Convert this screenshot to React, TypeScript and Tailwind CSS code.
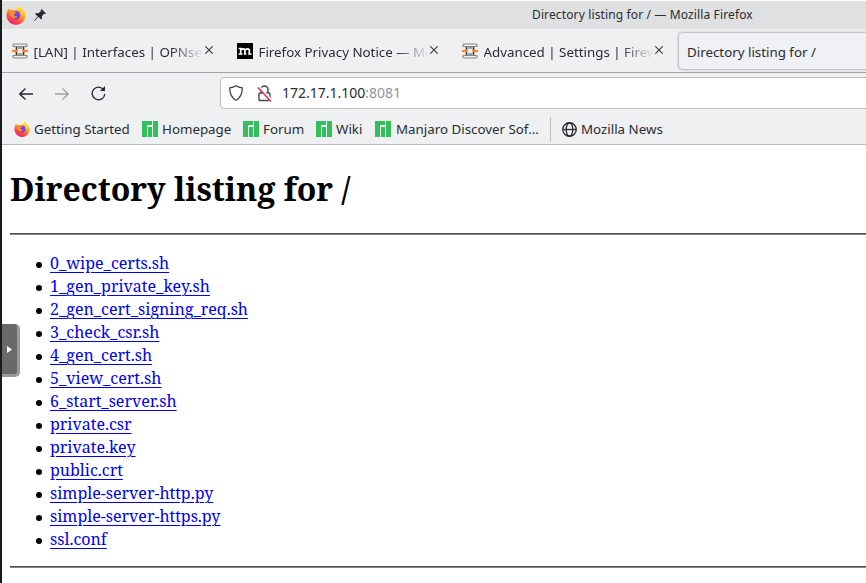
import type { ReactNode } from 'react';

function FirefoxIcon({ size }: { size: number }) {
  return (
    <svg width={size} height={size} viewBox="0 0 20 20" className="shrink-0">
      <defs>
        <linearGradient id="flame" x1="0.8" y1="0.05" x2="0.3" y2="1">
          <stop offset="0" stopColor="#fff04a" />
          <stop offset="0.35" stopColor="#ffb32c" />
          <stop offset="0.65" stopColor="#ff5b36" />
          <stop offset="1" stopColor="#ee1b70" />
        </linearGradient>
      </defs>
      <path d="M2.5 3.5 4 5l2-1 1.5 1.5C9 4.5 10.500 4 11.500 3.500L13 .3c1 1.700 3 3.200 4.500 5 1.400 1.600 2 3.200 2 5A9.500 9.500 0 0 1 .5 10.500c0-2.600.8-5 2-7Z" fill="url(#flame)" />
      <circle cx="10" cy="10.200" r="4.300" fill="#7542e5" />
      <path d="M3 7c2-2 4-1.500 5-.2l2.500.2c-.3 1.300-2 1.500-2.500 2.500 0 1.500 1.500 2.200 3.500 1.500-1 2.500-4.500 3-6.500.5C4 10 4 8.500 3 7Z" fill="#ff8a2b" />
      <path d="M10.500 5.500c2.500-.5 4.500 1.500 4.300 4.500.8-.5.800-1.500.7-2.500C14.500 4.500 12 4 10.500 5.500Z" fill="#ffbd32" />
    </svg>
  );
}

function OpnIcon() {
  return (
    <svg width="16" height="16" viewBox="0 0 16 16" className="shrink-0">
      <path d="M1 3.500V2.200Q1 1 2.200 1h11.600Q15 1 15 2.200v1.300M1 12.500v1.300Q1 15 2.200 15h11.600q1.200 0 1.200-1.200v-1.300M1 3.500h14M1 12.500h14" fill="none" stroke="#85867f" strokeWidth="1.200" />
      <path d="M4.500 4v8M11.500 4v8" stroke="#33312f" strokeWidth="1.500" />
      <path d="M6 5h4M6 11h4" stroke="#55534f" strokeWidth="1" />
      <path d="M0 7h3V5.500L6 8l-3 2.500V9H0ZM16 7h-3V5.500L10 8l3 2.500V9h3Z" fill="#ff8429" />
    </svg>
  );
}

function MozillaIcon() {
  return (
    <svg width="16" height="16" viewBox="0 0 16 16" className="shrink-0">
      <path fill="#000" d="M0 0h16v16H0z" />
      <path d="M1.500 5.500h2.200v5M1.500 11h4M3.700 7.200q2.800-2.500 4.200-.4V11M7.900 7.200q2.900-2.600 4.400-.4V11M6.800 11h2.500M11.200 11h3.300" fill="none" stroke="#fff" strokeWidth="1.700" />
    </svg>
  );
}

function ManjaroIcon() {
  return (
    <svg width="16" height="16" viewBox="0 0 16 16" className="shrink-0" fill="#35bf5c" shapeRendering="crispEdges">
      <path d="M0 0h10v4H5v12H0zM6 6h4v10H6zM11 0h5v16h-5z" />
    </svg>
  );
}

function CloseIcon() {
  return (
    <svg width="8" height="8" viewBox="0 0 8 8" className="shrink-0">
      <path d="M.3.3l7.400 7.400M7.700.3.3 7.700" stroke="#36393c" strokeWidth="1.100" />
    </svg>
  );
}

function Tab({ icon, children }: { icon: ReactNode; children: ReactNode }) {
  return (
    <div className="flex w-[225px] shrink-0 items-center pl-[10px]">
      {icon}
      <span className="mt-[2px] ml-[5.500px] w-[170.500px] overflow-hidden text-[13.333px] leading-5 [mask-image:linear-gradient(to_right,black_80%,transparent)]">{children}</span>
      <span className="-mt-px ml-px flex"><CloseIcon /></span>
    </div>
  );
}

const files = [
  '0_wipe_certs.sh', '1_gen_private_key.sh', '2_gen_cert_signing_req.sh', '3_check_csr.sh',
  '4_gen_cert.sh', '5_view_cert.sh', '6_start_server.sh', 'private.csr', 'private.key',
  'public.crt', 'simple-server-http.py', 'simple-server-https.py', 'ssl.conf',
];

export default function App() {
  return (
    <div className="relative flex h-[583px] w-[866px] flex-col overflow-hidden border-l-2 border-[#191a1d] bg-white whitespace-nowrap font-['Noto_Sans',sans-serif] text-[#292c30]">
      <header className="mt-px flex h-7 shrink-0 items-center bg-[#dee0e2] pl-[4px]">
        <FirefoxIcon size={20} />
        <svg width="12" height="12" viewBox="0 0 12 12" className="ml-[8px]" fill="#25282b">
          <path d="M7.500 0 12 4.500l-1 .5-1-.2-2.200 2.400.2 2.300-1 1-2.500-2.700L.5 12l-.4-.4 3.700-4.200L1.200 5l1-1 2.400.2L7 2.100l-.2-1Z" />
        </svg>
        <h2 className="ml-[486px] text-[12px] leading-5 tracking-[0.13px]">Directory listing for / — Mozilla Firefox</h2>
      </header>

      <nav className="flex h-[44px] shrink-0 items-center border-b border-[#a2a4a7] bg-[#eff0f2]">
        <Tab icon={<OpnIcon />}>[LAN] | Interfaces | OPNse</Tab>
        <Tab icon={<MozillaIcon />}>Firefox Privacy Notice — Mo</Tab>
        <Tab icon={<OpnIcon />}>Advanced | Settings | Firew</Tab>
        <div className="mt-px ml-[2px] flex h-[36px] w-[225px] shrink-0 items-center rounded bg-[#f0f1f4] pl-[8px] shadow-[0_0_3px_rgba(0,0,0,0.5)]">
          <span className="mt-px text-[13.333px] leading-5">Directory listing for /</span>
        </div>
      </nav>

      <div className="flex h-[41px] shrink-0 items-center bg-[#eff0f2] pl-[17px]">
        <svg width="14" height="12" viewBox="0 0 14 12" className="shrink-0" fill="none" stroke="#232629" strokeWidth="1.300"><path d="M6.500.5.8 6l5.700 5.500M.8 6H14" /></svg>
        <svg width="14" height="12" viewBox="0 0 14 12" className="ml-[22px] shrink-0" fill="none" stroke="#a0a2a4" strokeWidth="1.300"><path d="M7.500.5 13.200 6l-5.700 5.500M13.200 6H0" /></svg>
        <svg width="15" height="15" viewBox="0 0 15 15" className="ml-[22px] shrink-0"><path d="M12.800 4A6.300 6.300 0 1 0 13.800 8" fill="none" stroke="#232629" strokeWidth="1.300" /><path d="M14 0v5H9Z" fill="#232629" /></svg>
        <div className="-mt-px ml-[114px] flex h-8 w-[660px] shrink-0 items-center rounded border border-[#b9bbbd] bg-white pl-[8px]">
          <svg width="14" height="16" viewBox="0 0 14 16" fill="none" stroke="#404346" strokeWidth="1.300"><path d="M7 .8c2 1.400 4.200 1.900 6.300 2.100 0 6-1.800 9.700-6.300 12.300C2.500 12.600.7 8.900.7 2.900 2.800 2.700 5 2.200 7 .8Z" /></svg>
          <svg width="15" height="17" viewBox="0 0 15 17" className="ml-[14px]" fill="none" stroke="#45484b" strokeWidth="1.400"><rect x="2" y="8" width="11" height="7.500" rx="1" /><path d="M4 8V4.500a3.500 3.500 0 0 1 7 0V8" /><path d="M1.500 1.500 14.500 16" stroke="#fff" strokeWidth="3" /><path d="M1 2.500 14 16.500" stroke="#e22850" strokeWidth="1.500" /></svg>
          <span className="ml-[10px] text-[14px] leading-5">172.17.1.100<span className="text-[#929496]">:8081</span></span>
        </div>
      </div>

      <div className="flex h-[31px] shrink-0 items-center border-b border-[#b8babc] bg-[#eff0f2] pl-[12px] text-[13.333px] leading-5">
        <div className="flex w-[128px] items-center gap-1"><FirefoxIcon size={16} /><span>Getting Started</span></div>
        <div className="flex w-[101px] items-center gap-1"><ManjaroIcon /><span>Homepage</span></div>
        <div className="flex w-[73px] items-center gap-1"><ManjaroIcon /><span>Forum</span></div>
        <div className="flex w-[59px] items-center gap-1"><ManjaroIcon /><span>Wiki</span></div>
        <div className="flex w-[175px] items-center gap-[5px]"><ManjaroIcon /><span>Manjaro Discover Sof...</span></div>
        <div className="h-[25px] w-px bg-[#bcbec0]" />
        <div className="ml-[11px] flex items-center gap-1">
          <svg width="15" height="15" viewBox="0 0 16 16" fill="none" stroke="#292c2f" strokeWidth="1.400"><circle cx="8" cy="8" r="7.200" /><ellipse cx="8" cy="8" rx="3.500" ry="7.200" /><path d="M1 8h14" /></svg>
          <span>Mozilla News</span>
        </div>
      </div>

      <main className="flex-1 pl-2 font-['Noto_Serif','Droid_Serif','DejaVu_Serif_Condensed',serif] text-black">
        <h1 className="mt-[22px] h-[44px] text-[32px] leading-[44px] font-bold">Directory listing for /</h1>
        <hr className="mt-[22px] h-[2px] border-t border-b border-t-[#4b4b4b] border-b-[#858585]" />
        <ul className="mt-[17px] pl-[26px] text-[16px] leading-[23px]">
          {files.map((file) => (
            <li key={file} className="flex items-center">
              <span className="mt-[3px] mr-[8px] size-[6px] rounded-full bg-black" />
              <a href="#" className="text-[#0000ee] underline decoration-1 underline-offset-[3px]">{file}</a>
            </li>
          ))}
        </ul>
        <hr className="mt-[15px] h-[2px] border-t border-b border-t-[#4b4b4b] border-b-[#858585]" />
      </main>

      <div className="absolute top-[324px] left-0 flex h-[53px] w-[18px] items-center rounded-r-[5px] border-r-[3px] border-b-[3px] border-[#999] bg-[#696969] pl-[5px]">
        <svg width="5" height="7" viewBox="0 0 5 7"><path d="M0 0 5 3.500 0 7Z" fill="#fff" /></svg>
      </div>
    </div>
  );
}
